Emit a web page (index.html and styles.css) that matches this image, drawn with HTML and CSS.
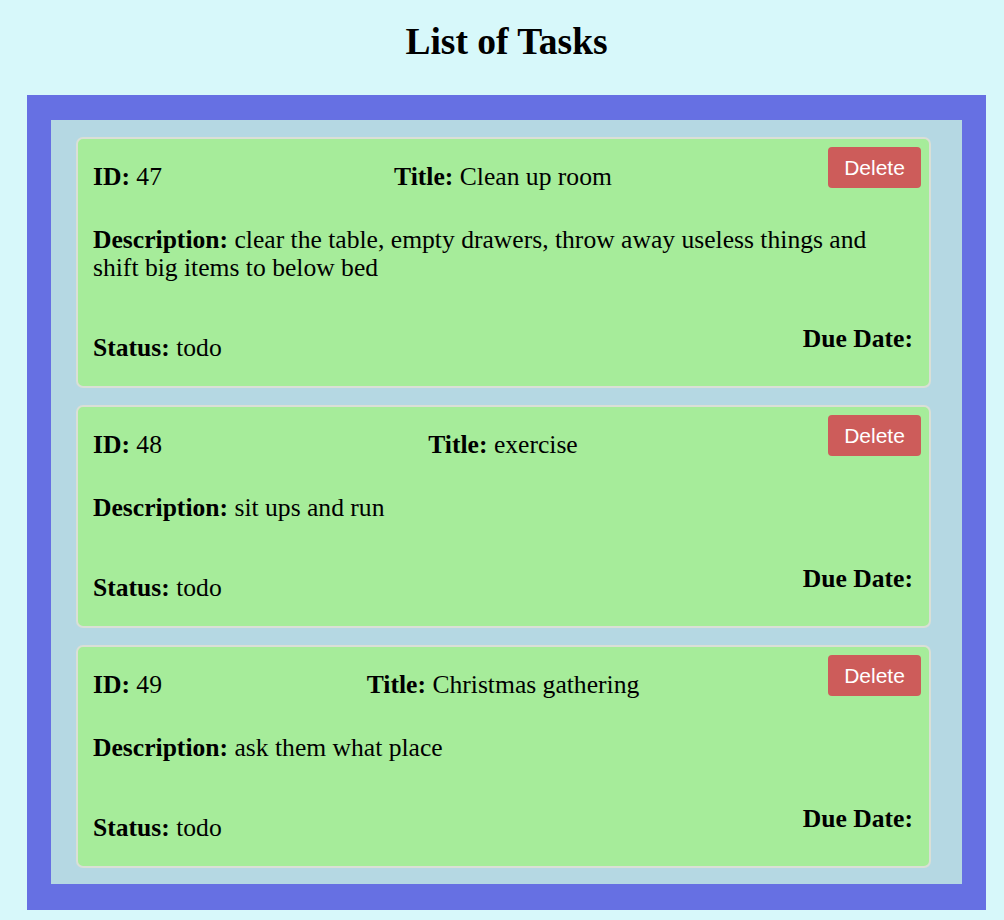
FILE: index.html
```html
<!DOCTYPE html>
<html>
<head>
<meta charset="utf-8">
<title>List of Tasks</title>
<link rel="stylesheet" href="styles.css">
</head>
<body>
<div class="page">
  <h1 class="heading">List of Tasks</h1>
  <div class="frame">
    <div class="list">
      <div class="card">
        <button class="delete">Delete</button>
        <div class="top-row">
          <div class="field"><b>ID:</b> 47</div>
          <div class="field title"><b>Title:</b> Clean up room</div>
          <div></div>
        </div>
        <div class="desc"><b>Description:</b> clear the table, empty drawers, throw away useless things and shift big items to below bed</div>
        <div class="bottom-row">
          <div class="field"><b>Status:</b> todo</div>
          <div class="due">Due Date:</div>
        </div>
      </div>
      <div class="card">
        <button class="delete">Delete</button>
        <div class="top-row">
          <div class="field"><b>ID:</b> 48</div>
          <div class="field title"><b>Title:</b> exercise</div>
          <div></div>
        </div>
        <div class="desc"><b>Description:</b> sit ups and run</div>
        <div class="bottom-row">
          <div class="field"><b>Status:</b> todo</div>
          <div class="due">Due Date:</div>
        </div>
      </div>
      <div class="card">
        <button class="delete">Delete</button>
        <div class="top-row">
          <div class="field"><b>ID:</b> 49</div>
          <div class="field title"><b>Title:</b> Christmas gathering</div>
          <div></div>
        </div>
        <div class="desc"><b>Description:</b> ask them what place</div>
        <div class="bottom-row">
          <div class="field"><b>Status:</b> todo</div>
          <div class="due">Due Date:</div>
        </div>
      </div>
    </div>
  </div>
</div>
</body>
</html>
```
FILE: styles.css
```css
html, body {
  margin: 0;
  padding: 0;
}

body {
  background: #d7f8fa;
  font-family: "Liberation Serif", "Times New Roman", serif;
  color: #000;
}

.page {
  margin-left: 27px;
  width: 959px;
  padding-top: 20px;
  padding-bottom: 10px;
}

.heading {
  margin: 0 0 32px 0;
  font-size: 37.5px;
  font-weight: bold;
  text-align: center;
}

.frame {
  border: 24px solid #6670e3;
  border-top-width: 25px;
  border-bottom-width: 26px;
  background: #b5d8e3;
  padding: 17px 31px 16px 25px;
}

.list {
  display: flex;
  flex-direction: column;
  gap: 17px;
}

.card {
  position: relative;
  background: #a6ec9a;
  border: 2px solid #dadfd6;
  border-radius: 7px;
  padding: 24px 16px 24px 15px;
  font-size: 25.6px;
  line-height: 28px;
}

.delete {
  position: absolute;
  top: 8px;
  right: 8px;
  width: 93px;
  height: 41px;
  background: #cd5c5a;
  color: #fff;
  border: none;
  border-radius: 4px;
  font-family: "Liberation Sans", Arial, sans-serif;
  font-size: 21px;
  padding: 0;
}

.top-row {
  display: grid;
  grid-template-columns: 1fr auto 1fr;
}

.title {
  text-align: center;
}

.desc {
  margin-top: 35px;
}

.bottom-row {
  margin-top: 43px;
  display: flex;
  justify-content: space-between;
  align-items: flex-end;
}

.due {
  font-weight: bold;
  margin-bottom: 9px;
}
```
